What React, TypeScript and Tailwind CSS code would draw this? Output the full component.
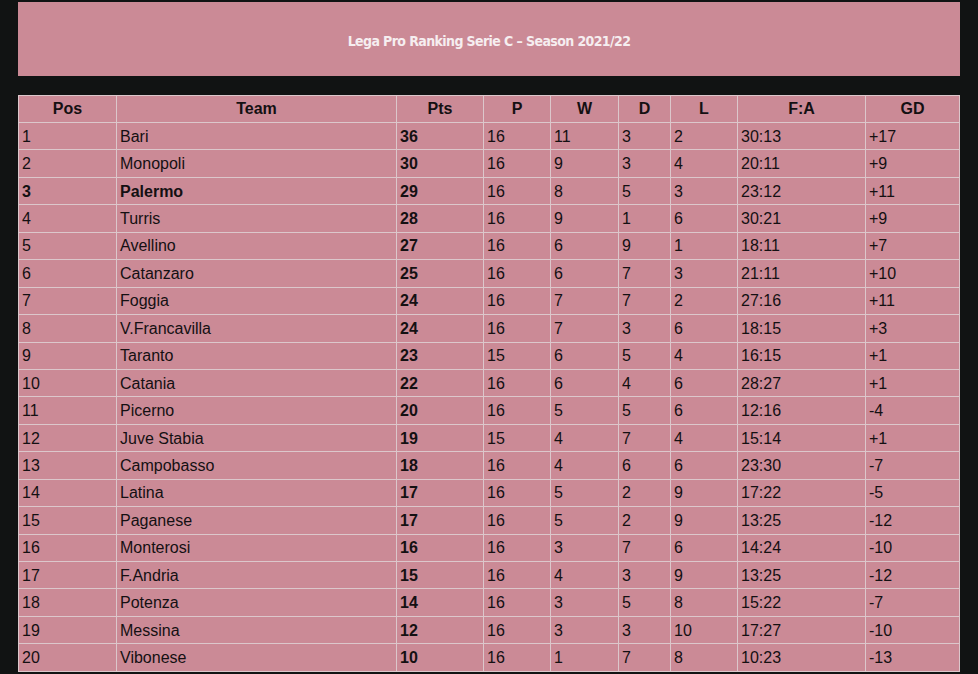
import React from "react";

const rows: [number, string, number, number, number, number, number, string, string][] = [
  [1, "Bari", 36, 16, 11, 3, 2, "30:13", "+17"],
  [2, "Monopoli", 30, 16, 9, 3, 4, "20:11", "+9"],
  [3, "Palermo", 29, 16, 8, 5, 3, "23:12", "+11"],
  [4, "Turris", 28, 16, 9, 1, 6, "30:21", "+9"],
  [5, "Avellino", 27, 16, 6, 9, 1, "18:11", "+7"],
  [6, "Catanzaro", 25, 16, 6, 7, 3, "21:11", "+10"],
  [7, "Foggia", 24, 16, 7, 7, 2, "27:16", "+11"],
  [8, "V.Francavilla", 24, 16, 7, 3, 6, "18:15", "+3"],
  [9, "Taranto", 23, 15, 6, 5, 4, "16:15", "+1"],
  [10, "Catania", 22, 16, 6, 4, 6, "28:27", "+1"],
  [11, "Picerno", 20, 16, 5, 5, 6, "12:16", "-4"],
  [12, "Juve Stabia", 19, 15, 4, 7, 4, "15:14", "+1"],
  [13, "Campobasso", 18, 16, 4, 6, 6, "23:30", "-7"],
  [14, "Latina", 17, 16, 5, 2, 9, "17:22", "-5"],
  [15, "Paganese", 17, 16, 5, 2, 9, "13:25", "-12"],
  [16, "Monterosi", 16, 16, 3, 7, 6, "14:24", "-10"],
  [17, "F.Andria", 15, 16, 4, 3, 9, "13:25", "-12"],
  [18, "Potenza", 14, 16, 3, 5, 8, "15:22", "-7"],
  [19, "Messina", 12, 16, 3, 3, 10, "17:27", "-10"],
  [20, "Vibonese", 10, 16, 1, 7, 8, "10:23", "-13"],
];

const headers = ["Pos", "Team", "Pts", "P", "W", "D", "L", "F:A", "GD"];
const widths = ["w-[98px]", "w-[280px]", "w-[87px]", "w-[67px]", "w-[68px]", "w-[52px]", "w-[67px]", "w-[128px]", "w-[94px]"];

export default function App() {
  return (
    <div className="min-h-[674px] w-full bg-[#111313] pt-[2px] pl-[18px] pr-[18px] font-['Liberation_Sans',Arial,sans-serif]">
      <div className="flex h-[74px] w-[942px] items-center justify-center bg-[#cb8a96] pt-[4px]">
        <h1 className="font-['DejaVu_Sans_Condensed','DejaVu_Sans',sans-serif] text-[14px] font-bold tracking-[-0.6px] text-[#f6eef0]">
          Lega Pro Ranking Serie C – Season 2021/22
        </h1>
      </div>
      <table className="mt-[19px] w-[942px] table-fixed border-collapse bg-[#cb8a96] text-[16px] text-[#141012]">
        <thead>
          <tr className="h-[27px]">
            {headers.map((h, i) => (
              <th key={h} className={`${widths[i]} border border-[#dcc7cb] px-[3px] text-center font-bold leading-[18px]`}>
                {h}
              </th>
            ))}
          </tr>
        </thead>
        <tbody>
          {rows.map((r) => {
            const bold = r[1] === "Palermo";
            return (
              <tr key={r[0]} className="h-[27.45px]">
                {r.map((c, i) => (
                  <td
                    key={i}
                    className={`border border-[#dcc7cb] px-[3px] pt-[1px] text-left leading-[18px] ${(bold && i < 2) || i === 2 ? "font-bold" : "font-normal"}`}
                  >
                    {c}
                  </td>
                ))}
              </tr>
            );
          })}
        </tbody>
      </table>
    </div>
  );
}
